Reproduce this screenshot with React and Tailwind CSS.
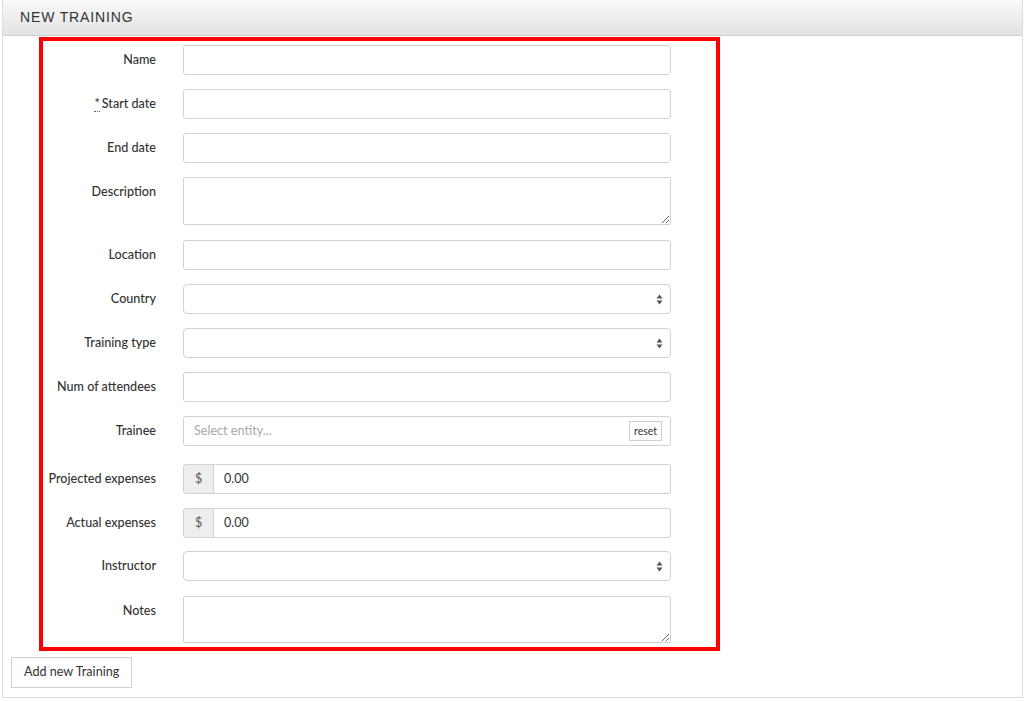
import React from "react";

const font = { fontFamily: "Lato, 'Open Sans', sans-serif" };

function Arrows() {
  return (
    <svg width="7" height="11" viewBox="0 0 7 11" className="text-[#555]">
      <path d="M3.5 0.5 L6.5 4.5 L0.5 4.5 Z" fill="currentColor" />
      <path d="M3.5 10.5 L6.5 6.5 L0.5 6.5 Z" fill="currentColor" />
    </svg>
  );
}

function TextInput() {
  return <input className="w-full h-[30px] border border-[#d2d2d2] rounded-[3px] bg-white px-[10px] text-[12px] outline-none" />;
}

function TextArea({ h }) {
  return <textarea className={`w-full ${h} border border-[#d2d2d2] rounded-[2px] bg-white px-[10px] py-[6px] text-[12px] outline-none block`} />;
}

function SelectBox() {
  return (
    <div className="w-full h-[30px] border border-[#d2d2d2] rounded-[4px] bg-white flex items-center justify-end pr-[7px]">
      <Arrows />
    </div>
  );
}

function Trainee() {
  return (
    <div className="w-full h-[30px] border border-[#d2d2d2] rounded-[3px] bg-white flex items-center justify-between pl-[10px] pr-[8px]">
      <span className="text-[12.6px] text-[#a8a8a8]">Select entity...</span>
      <span className="border border-[#cfcfcf] bg-white text-[10.5px] text-[#333] leading-none px-[4px] py-[4px]">reset</span>
    </div>
  );
}

function Money() {
  return (
    <div className="w-full h-[30px] flex">
      <div className="w-[31px] shrink-0 bg-[#eeeeee] border border-[#d2d2d2] rounded-l-[3px] flex items-center justify-center text-[12.5px] text-[#555]">$</div>
      <div className="flex-1 border border-l-0 border-[#d2d2d2] rounded-r-[3px] bg-white flex items-center pl-[10px] text-[12.5px] text-[#333]">0.00</div>
    </div>
  );
}

const rows = [
  { label: "Name", mt: "mt-0", el: <TextInput /> },
  { label: "Start date", req: true, mt: "mt-[14px]", el: <TextInput /> },
  { label: "End date", mt: "mt-[14px]", el: <TextInput /> },
  { label: "Description", mt: "mt-[14px]", el: <TextArea h="h-[48px]" /> },
  { label: "Location", mt: "mt-[15px]", el: <TextInput /> },
  { label: "Country", mt: "mt-[14px]", el: <SelectBox /> },
  { label: "Training type", mt: "mt-[14px]", el: <SelectBox /> },
  { label: "Num of attendees", mt: "mt-[14px]", el: <TextInput /> },
  { label: "Trainee", mt: "mt-[14px]", el: <Trainee /> },
  { label: "Projected expenses", mt: "mt-[18px]", el: <Money /> },
  { label: "Actual expenses", mt: "mt-[14px]", el: <Money /> },
  { label: "Instructor", mt: "mt-[13px]", el: <SelectBox /> },
  { label: "Notes", mt: "mt-[15px]", el: <TextArea h="h-[47px]" /> },
];

export default function App() {
  return (
    <div className="bg-white w-[1025px] h-[701px]" style={font}>
      <div className="ml-[2px] w-[1021px] border border-[#dcdcdc] border-t-0 pb-[9px]">
        <div className="h-[36px] border-b border-[#cfcfcf] bg-gradient-to-b from-[#f9f9f9] to-[#e3e3e3] flex items-center pl-[17px]">
          <span className="text-[14px] tracking-[0.85px] text-[#333]" style={{ fontFamily: "'Liberation Sans', Arial, sans-serif" }}>NEW TRAINING</span>
        </div>
        <div className="ml-[36px] mt-[1px] w-[681px] border-[4px] border-[#ff0000] pt-[4px] pb-[4px]">
          {rows.map((r) => (
            <div key={r.label} className={`flex ${r.mt}`}>
              <div className="w-[113px] shrink-0 text-right pt-[7px] text-[12.6px] leading-[16px] text-[#333] font-medium whitespace-nowrap">
                {r.req && <span className="border-b border-dotted border-[#666] mr-[2px]">*</span>}
                {r.label}
              </div>
              <div className="ml-[27px] w-[488px]">{r.el}</div>
            </div>
          ))}
        </div>
        <div className="mt-[6px] ml-[8px]">
          <button className="h-[31px] px-[12px] border border-[#cfcfcf] bg-white text-[12.6px] text-[#333]" style={font}>Add new Training</button>
        </div>
      </div>
    </div>
  );
}
